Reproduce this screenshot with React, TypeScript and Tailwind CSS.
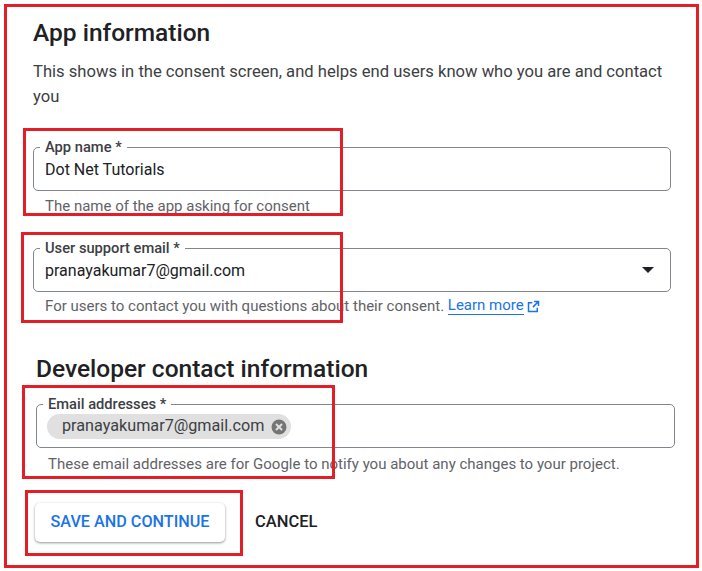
import React from "react";

function Field({ label, children, right, className = "" }: { label: string; children: React.ReactNode; right?: React.ReactNode; className?: string }) {
  return (
    <div className={"relative h-[44px] rounded-[5px] border border-[#80868b] flex items-center pl-[11px] pr-[16px] " + className}>
      <span className="absolute -top-[10px] left-[6px] bg-white px-[5px] text-[14.7px] leading-[18px] font-medium text-[#3c4043]">{label}</span>
      <div className="flex-1 text-[16px] text-[#202124] pt-[1px]">{children}</div>
      {right}
    </div>
  );
}

export default function App() {
  return (
    <div className="relative w-[702px] h-[571px] bg-white overflow-hidden" style={{ fontFamily: "Roboto, 'Liberation Sans', sans-serif" }}>
      <div className="absolute left-[4px] top-[4px] w-[695px] h-[564px] border-[3px] border-[#e41e26] pointer-events-none" />
      <div className="pl-[33px] pr-[31px] pt-[18px]">
        <h1 className="text-[24.5px] leading-[30px] font-medium text-[#202124]">App information</h1>
        <p className="mt-[11px] text-[16.6px] leading-[25px] text-[#3c4043]">This shows in the consent screen, and helps end users know who you are and contact you</p>
        <Field label="App name *" className="mt-[38px]">Dot Net Tutorials</Field>
        <div className="pl-[12px] mt-[6px] text-[15px] leading-[18px] text-[#5f6368]">The name of the app asking for consent</div>
        <Field
          label="User support email *"
          className="mt-[33px]"
          right={<svg width="12" height="6" viewBox="0 0 12 6"><path d="M0 0h12L6 6z" fill="#202124" /></svg>}
        >
          pranayakumar7@gmail.com
        </Field>
        <div className="pl-[12px] mt-[5px] text-[15px] leading-[18px] text-[#5f6368] flex items-center">
          For users to contact you with questions about their consent.&nbsp;
          <span className="text-[#1a73e8] border-b border-[#1a73e8] leading-[17px]">Learn more</span>
          <svg width="15" height="15" viewBox="0 0 24 24" className="ml-[2px]" fill="none" stroke="#1a73e8" strokeWidth="2.4"><path d="M13 4h7v7M20 4l-9 9M18 14v6H4V6h6" /></svg>
        </div>
      </div>
      <div className="pl-[36px] pr-[27px] mt-[39px]">
        <h2 className="text-[24.5px] leading-[30px] font-medium text-[#202124]">Developer contact information</h2>
        <Field label="Email addresses *" className="mt-[20px]">
          <span className="inline-flex items-center h-[25px] rounded-full bg-[#e0e0e0] pl-[15px] pr-[3px] text-[16.2px] text-[#3c4043] -ml-[1px]">
            pranayakumar7@gmail.com
            <svg width="18" height="18" viewBox="0 0 24 24" className="ml-[6px]"><circle cx="12" cy="12" r="10" fill="#757575" /><path d="M8 8l8 8M16 8l-8 8" stroke="#e0e0e0" strokeWidth="2.6" /></svg>
          </span>
        </Field>
        <div className="pl-[12px] mt-[7px] text-[15px] leading-[18px] text-[#5f6368]">These email addresses are for Google to notify you about any changes to your project.</div>
        <div className="flex items-center mt-[30px] -ml-[1px]">
          <button className="h-[39px] w-[190px] rounded-[5px] bg-white text-[#1a73e8] text-[16.2px] font-medium shadow-[0_1px_3px_rgba(60,64,67,0.35),0_1px_2px_rgba(60,64,67,0.25)]">SAVE AND CONTINUE</button>
          <button className="ml-[30px] text-[16.5px] font-medium text-[#202124]">CANCEL</button>
        </div>
      </div>
      <div className="absolute left-[23px] top-[128px] w-[320px] h-[88px] border-[3px] border-[#e41e26]" />
      <div className="absolute left-[21px] top-[232px] w-[322px] h-[91px] border-[3px] border-[#e41e26]" />
      <div className="absolute left-[22px] top-[385px] w-[313px] h-[94px] border-[3px] border-[#e41e26]" />
      <div className="absolute left-[25px] top-[490px] w-[218px] h-[66px] border-[3px] border-[#e41e26]" />
    </div>
  );
}
